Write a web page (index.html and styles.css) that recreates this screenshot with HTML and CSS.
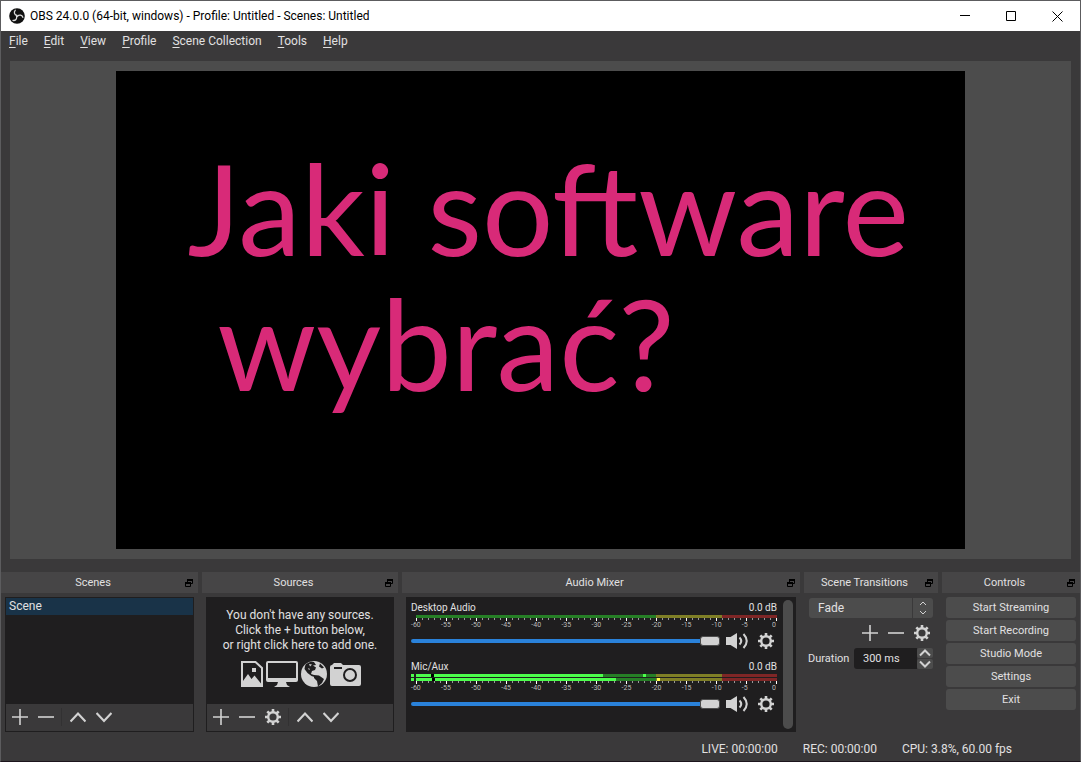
FILE: index.html
```html
<!DOCTYPE html>
<html lang="en">
  <head>
    <meta charset="UTF-8" />
    <meta name="viewport" content="width=device-width, initial-scale=1.0" />
    <title>OBS 24.0.0 (64-bit, windows) - Profile: Untitled - Scenes: Untitled</title>
    <link rel="stylesheet" href="styles.css">
  </head>
  <body>
    <!-- shared icons -->
    <svg class="sprite" aria-hidden="true">
      <symbol id="plus" viewBox="0 0 16 16"><path d="M8 0v16M0 8h16" stroke="currentColor" stroke-width="1.6" /></symbol>
      <symbol id="minus" viewBox="0 0 16 16"><path d="M0 8h16" stroke="currentColor" stroke-width="1.6" /></symbol>
      <symbol id="up" viewBox="0 0 16 16"><path d="M.5 12.500l7.500-8 7.500 8" fill="none" stroke="currentColor" stroke-width="2.2" /></symbol>
      <symbol id="down" viewBox="0 0 16 16"><path d="M.5 4l7.500 8 7.500-8" fill="none" stroke="currentColor" stroke-width="2.2" /></symbol>
      <symbol id="gear" viewBox="0 0 16 16">
        <circle cx="8" cy="8" r="4.8" fill="none" stroke="currentColor" stroke-width="2.4" />
        <path d="M8 0v3M8 13v3M0 8h3M13 8h3M2.300 2.300l2.200 2.200M11.500 11.500l2.200 2.200M2.300 13.700l2.200-2.200M11.500 4.500l2.200-2.200" stroke="currentColor" stroke-width="2.6" />
      </symbol>
      <symbol id="speaker" viewBox="0 0 22 16">
        <path d="M0 4h4.500L11 0v16l-6.500-4H0z" fill="currentColor" />
        <path d="M13.500 4.500q3.500 3.500 0 7M17.500 1q6.500 7 0 14" fill="none" stroke="currentColor" stroke-width="2" />
      </symbol>
      <symbol id="float" viewBox="0 0 8 8">
        <path d="M2.500 3V.5h5v4H6" fill="none" stroke="#000" />
        <path d="M2 1h6" stroke="#000" stroke-width="2" />
        <path d="M.5 3.500h5v4h-5z" fill="#464546" stroke="#000" />
        <path d="M0 4h6" stroke="#000" stroke-width="2" />
      </symbol>
    </svg>

    <div class="window">
      <header class="titlebar">
        <svg class="logo" viewBox="0 0 16 16">
          <circle cx="8" cy="8" r="7.800" fill="#111" />
          <g fill="none" stroke="#ddd" stroke-width="1.300" stroke-linecap="round">
            <path d="M8 7.500C5.300 6.800 4.600 4.200 6.200 2.300" />
            <path d="M8 7.500C5.300 6.800 4.600 4.200 6.200 2.300" transform="rotate(120 8 8)" />
            <path d="M8 7.500C5.300 6.800 4.600 4.200 6.200 2.300" transform="rotate(240 8 8)" />
          </g>
        </svg>
        <h1 class="caption">OBS 24.0.0 (64-bit, windows) - Profile: Untitled - Scenes: Untitled</h1>
        <button class="winbtn" aria-label="Minimize"><svg viewBox="0 0 11 11"><path d="M0 4.500h10" /></svg></button>
        <button class="winbtn" aria-label="Maximize"><svg viewBox="0 0 11 11"><path d="M.5.5h9v9h-9z" /></svg></button>
        <button class="winbtn" aria-label="Close"><svg viewBox="0 0 11 11"><path d="M.5.5l10 10M10.500.5l-10 10" /></svg></button>
      </header>

      <nav class="menu">
        <a href="#"><u>F</u>ile</a>
        <a href="#"><u>E</u>dit</a>
        <a href="#"><u>V</u>iew</a>
        <a href="#"><u>P</u>rofile</a>
        <a href="#"><u>S</u>cene Collection</a>
        <a href="#"><u>T</u>ools</a>
        <a href="#"><u>H</u>elp</a>
      </nav>

      <main class="preview">
        <div class="canvas">
          <p class="headline">Jaki software<br />&nbsp;wybrać?</p>
        </div>
      </main>

      <div class="docks">
        <section class="dock">
          <h2 class="dock-title"><span>Scenes</span><svg><use href="#float" /></svg></h2>
          <div class="panel">
            <ul class="list">
              <li class="selected">Scene</li>
            </ul>
            <div class="toolbar">
              <button class="tool" aria-label="Add scene"><svg><use href="#plus" /></svg></button>
              <button class="tool" aria-label="Remove scene"><svg><use href="#minus" /></svg></button>
              <span class="sep"></span>
              <button class="tool" aria-label="Move scene up"><svg><use href="#up" /></svg></button>
              <button class="tool" aria-label="Move scene down"><svg><use href="#down" /></svg></button>
            </div>
          </div>
        </section>

        <section class="dock">
          <h2 class="dock-title"><span>Sources</span><svg><use href="#float" /></svg></h2>
          <div class="panel">
            <div class="empty">
              <p>You don't have any sources.<br />Click the + button below,<br />or right click here to add one.</p>
              <div class="kinds">
                <svg class="image" viewBox="0 0 24 28">
                  <path d="M2 2h13.500l6.500 6v18H2z" fill="none" stroke="currentColor" stroke-width="2" />
                  <path d="M3 24v-3l5-7 3.500 5 3-3.500 6.500 8V26H3z" fill="currentColor" />
                  <path d="M12 8h4v4h-4z" fill="currentColor" />
                </svg>
                <svg class="display" viewBox="0 0 32 28">
                  <path fill-rule="evenodd" d="M2 1h28q2 0 2 2v17q0 2-2 2H20l1 3 3 2H8l3-2 1-3H2q-2 0-2-2V3q0-2 2-2zm0 2v15h28V3z" fill="currentColor" />
                </svg>
                <svg class="globe" viewBox="0 0 28 28">
                  <circle cx="14" cy="14" r="13" fill="currentColor" />
                  <path d="M6 4l5-2.500 3 .5 2 3-3 .5 3 2-1 2.500-3 1-1 3 3 1 .5 2-3-1-4-3-3-4 .5-3z" fill="#1f1e1f" />
                  <path d="M14 15l5 .5 5 3.500-2 4-4 3.500-1-5.500-3-3z" fill="#1f1e1f" />
                  <path d="M20 3.500l4 4-2 1-3-2z" fill="#1f1e1f" />
                  <path d="M9 4l3 .5-2 2zM8 8l2 1-1 1z" fill="currentColor" />
                </svg>
                <svg class="camera" viewBox="0 0 31 28">
                  <path d="M2 5l2-2h7l2 2h16q2 0 2 2v17q0 2-2 2H2q-2 0-2-2V7q0-2 2-2z" fill="currentColor" />
                  <circle cx="20" cy="15" r="6" fill="none" stroke="#1f1e1f" stroke-width="2" />
                  <path d="M4 8h8" stroke="#1f1e1f" stroke-width="2" />
                </svg>
              </div>
            </div>
            <div class="toolbar">
              <button class="tool" aria-label="Add source"><svg><use href="#plus" /></svg></button>
              <button class="tool" aria-label="Remove source"><svg><use href="#minus" /></svg></button>
              <button class="tool" aria-label="Source properties"><svg><use href="#gear" /></svg></button>
              <span class="sep"></span>
              <button class="tool" aria-label="Move source up"><svg><use href="#up" /></svg></button>
              <button class="tool" aria-label="Move source down"><svg><use href="#down" /></svg></button>
            </div>
          </div>
        </section>

        <section class="dock">
          <h2 class="dock-title"><span>Audio Mixer</span><svg><use href="#float" /></svg></h2>
          <div class="panel mixer">
            <div class="channels">
              <div class="channel">
                <div class="names"><label for="desktop">Desktop Audio</label><span>0.0 dB</span></div>
                <svg class="meter" viewBox="0 0 366 6" preserveAspectRatio="none" shape-rendering="crispEdges">
                  <defs>
                    <pattern id="ticks" x="5" y="0" width="30" height="3" patternUnits="userSpaceOnUse">
                      <path d="M0 0h1v3H0z" fill="#fff" />
                      <path d="M6 0h1v2H6zM12 0h1v2h-1zM18 0h1v2h-1zM24 0h1v2h-1z" fill="#999" />
                    </pattern>
                  </defs>
                  <path d="M5 0h240v3H5z" fill="#267f26" />
                  <path d="M245 0h66v3h-66z" fill="#7f7f26" />
                  <path d="M311 0h55v3h-55z" fill="#7f2626" />
                  <g transform="translate(0 3)"><path d="M5 0h361v3H5z" fill="url(#ticks)" /></g>
                </svg>
                <div class="scale"><span>-60</span><span>-55</span><span>-50</span><span>-45</span><span>-40</span><span>-35</span><span>-30</span><span>-25</span><span>-20</span><span>-15</span><span>-10</span><span>-5</span><span>0</span></div>
                <div class="volume">
                  <input type="range" id="desktop" min="0" max="100" value="100" />
                  <button class="mute" aria-label="Mute Desktop Audio"><svg><use href="#speaker" /></svg></button>
                  <button class="config" aria-label="Desktop Audio settings"><svg><use href="#gear" /></svg></button>
                </div>
              </div>

              <div class="channel">
                <div class="names"><label for="mic">Mic/Aux</label><span>0.0 dB</span></div>
                <svg class="meter double" viewBox="0 0 366 10" preserveAspectRatio="none" shape-rendering="crispEdges">
                  <path d="M5 0h240v3H5zM5 4h240v3H5z" fill="#267f26" />
                  <path d="M245 0h66v3h-66zM245 4h66v3h-66z" fill="#7f7f26" />
                  <path d="M311 0h55v3h-55zM311 4h55v3h-55z" fill="#7f2626" />
                  <path d="M0 0h3v3H0zM0 4h3v3H0zM5 0h187v3H5zM5 4h200v3H5zM232 0h3v3h-3z" fill="#4cff4c" />
                  <path d="M20 0h3v3h-3zM21 4h3v3h-3z" fill="#000" />
                  <path d="M246 4h3v3h-3z" fill="#ffff4c" />
                  <g transform="translate(0 7)"><path d="M5 0h361v3H5z" fill="url(#ticks)" /></g>
                </svg>
                <div class="scale"><span>-60</span><span>-55</span><span>-50</span><span>-45</span><span>-40</span><span>-35</span><span>-30</span><span>-25</span><span>-20</span><span>-15</span><span>-10</span><span>-5</span><span>0</span></div>
                <div class="volume">
                  <input type="range" id="mic" min="0" max="100" value="100" />
                  <button class="mute" aria-label="Mute Mic/Aux"><svg><use href="#speaker" /></svg></button>
                  <button class="config" aria-label="Mic/Aux settings"><svg><use href="#gear" /></svg></button>
                </div>
              </div>
            </div>
            <div class="scrollbar"></div>
          </div>
        </section>

        <section class="dock">
          <h2 class="dock-title"><span>Scene Transitions</span><svg><use href="#float" /></svg></h2>
          <div class="transitions">
            <div class="combo">
              <select aria-label="Transition">
                <option>Fade</option>
                <option>Cut</option>
              </select>
              <svg viewBox="0 0 20 20"><path d="M7 7l3-3 3 3M7 13l3 3 3-3" /></svg>
            </div>
            <div class="actions">
              <button class="tool" aria-label="Add transition"><svg><use href="#plus" /></svg></button>
              <button class="tool" aria-label="Remove transition"><svg><use href="#minus" /></svg></button>
              <button class="tool" aria-label="Transition properties"><svg><use href="#gear" /></svg></button>
            </div>
            <div class="duration">
              <label for="duration">Duration</label>
              <input type="text" id="duration" value="300 ms" />
              <div class="spin">
                <button aria-label="Increase"><svg viewBox="0 0 12 8"><path d="M1 6.500l5-5 5 5" /></svg></button>
                <button aria-label="Decrease"><svg viewBox="0 0 12 8"><path d="M1 1.500l5 5 5-5" /></svg></button>
              </div>
            </div>
          </div>
        </section>

        <section class="dock">
          <h2 class="dock-title"><span>Controls</span><svg><use href="#float" /></svg></h2>
          <div class="controls">
            <button>Start Streaming</button>
            <button>Start Recording</button>
            <button>Studio Mode</button>
            <button>Settings</button>
            <button>Exit</button>
          </div>
        </section>
      </div>

      <footer class="status">
        <span>LIVE: 00:00:00</span>
        <span>REC: 00:00:00</span>
        <span>CPU: 3.8%, 60.00 fps</span>
      </footer>
    </div>
  </body>
</html>
```
FILE: styles.css
```css
* {
  box-sizing: border-box;
}
body {
  margin: 0;
  font-family: Roboto, "Open Sans", sans-serif;
  font-size: 11px;
  line-height: 15px;
  color: #e1e0e1;
  background-color: #3a393a;
}
button,
input,
select {
  font: inherit;
  color: inherit;
  border: 0;
  margin: 0;
  padding: 0;
}
button {
  display: flex;
  align-items: center;
  justify-content: center;
  background: none;
}
h1,
h2,
p,
ul {
  margin: 0;
  padding: 0;
  font-size: inherit;
  font-weight: normal;
}
.sprite {
  position: absolute;
  width: 0;
  height: 0;
}
.window {
  display: flex;
  flex-direction: column;
  height: 100vh;
  border: 1px solid #5c5c5e;
  border-bottom-color: #1c141c;
}

/* title bar */
.titlebar {
  display: flex;
  align-items: center;
  height: 30px;
  padding-left: 8px;
  color: #000;
  background-color: #fff;
}
.logo {
  width: 16px;
  height: 16px;
  margin-right: 5px;
}
.caption {
  flex: 1;
  font-size: 12px;
}
.winbtn {
  width: 46px;
  height: 30px;
}
.winbtn svg {
  width: 11px;
  height: 11px;
  fill: none;
  stroke: #000;
}

/* menu */
.menu {
  display: flex;
  gap: 16px;
  padding: 3px 8px 12px;
  font-size: 12px;
}
.menu a {
  color: inherit;
  text-decoration: none;
}
.menu u {
  text-underline-offset: 2px;
}

/* preview */
.preview {
  flex: 1;
  min-height: 0;
  display: flex;
  justify-content: center;
  margin: 0 9px;
  padding: 10px;
  background-color: #4c4c4c;
}
.canvas {
  aspect-ratio: 16 / 9;
  padding: 69px 0 0 72px;
  background-color: #000;
}
.headline {
  font-family: Lato, sans-serif;
  font-size: 126px;
  line-height: 135px;
  color: #d82a78;
  white-space: nowrap;
}

/* docks */
.docks {
  display: grid;
  grid-template-columns: 197fr 196fr 398fr 134fr 138fr;
  gap: 4px;
  min-height: 160px;
  margin-top: 13px;
}
.dock {
  display: flex;
  flex-direction: column;
  min-width: 0;
}
.dock-title {
  display: flex;
  align-items: center;
  height: 21px;
  padding-right: 5px;
  text-align: center;
  background-color: #464546;
}
.dock-title span {
  flex: 1;
}
.dock-title svg {
  width: 8px;
  height: 8px;
}
.panel {
  flex: 1;
  display: flex;
  flex-direction: column;
  margin: 4px 4px 0;
  border: 1px solid #1f1e1f;
  background-color: #1f1e1f;
}
.list {
  flex: 1;
  font-size: 12px;
  list-style: none;
}
.selected {
  padding: 1px 3px;
  background-color: #193348;
}
.toolbar {
  display: flex;
  align-items: center;
  gap: 2px;
  height: 27px;
  padding: 0 0 2px 2px;
  background-color: #3a393a;
}
.tool {
  width: 24px;
  height: 24px;
  color: #d2d2d2;
}
.tool svg,
.config svg {
  width: 16px;
  height: 16px;
}
.sep {
  width: 2px;
  height: 18px;
  margin: 0 1px;
  border-left: 1px solid #323132;
}
.empty {
  flex: 1;
  padding-top: 10px;
  font-size: 12px;
  text-align: center;
}
.kinds {
  display: flex;
  justify-content: center;
  gap: 2px;
  margin-top: 7px;
  color: #d2d2d2;
}
.kinds svg {
  height: 28px;
}
.image {
  width: 24px;
}
.display {
  width: 32px;
}
.globe {
  width: 28px;
}
.camera {
  width: 31px;
}

/* mixer */
.mixer {
  flex-direction: row;
  gap: 6px;
  padding: 2px;
}
.channels {
  flex: 1;
  display: flex;
  flex-direction: column;
  gap: 8px;
  padding-left: 2px;
}
.names {
  display: flex;
  justify-content: space-between;
  font-size: 10px;
}
.meter {
  display: block;
  width: 100%;
  height: 6px;
}
.double {
  height: 10px;
}
.scale {
  display: flex;
  font-size: 7px;
  line-height: 8px;
  color: #bbb;
}
.scale span {
  flex: 1;
}
.scale span:last-child {
  flex: none;
  width: 5px;
}
.volume {
  display: flex;
  align-items: center;
  height: 20px;
  margin-top: 2px;
  color: #d2d2d2;
}
.volume input {
  flex: 1;
  min-width: 0;
  height: 10px;
  appearance: none;
  background: none;
}
.volume input::-webkit-slider-runnable-track {
  height: 4px;
  border-radius: 2px;
  background-color: #2a82da;
}
.volume input::-webkit-slider-thumb {
  appearance: none;
  width: 20px;
  height: 10px;
  margin-top: -3px;
  border: 1px solid #4c4c4c;
  border-radius: 3px;
  background-color: #d2d2d2;
}
.mute {
  width: 22px;
  margin: 0 10px 0 6px;
}
.mute svg {
  width: 22px;
  height: 16px;
}
.config {
  width: 16px;
  margin-right: 3px;
}
.scrollbar {
  width: 10px;
  border-radius: 5px;
  background-color: #4c4c4c;
}

/* transitions */
.transitions {
  display: flex;
  flex-direction: column;
  gap: 4px;
  padding: 5px 4px 0;
}
.combo {
  display: grid;
  margin: 0 1px;
}
.combo select,
.combo svg {
  grid-area: 1 / 1;
}
.combo select {
  height: 20px;
  padding-left: 9px;
  font-size: 12px;
  appearance: none;
  border-radius: 3px;
  background-color: #4c4c4c;
}
.combo svg {
  justify-self: end;
  width: 21px;
  height: 20px;
  border-left: 1px solid #3a393a;
  fill: none;
  stroke: #d2d2d2;
  pointer-events: none;
}
.actions {
  display: flex;
  justify-content: flex-end;
  gap: 2px;
  height: 22px;
  align-items: center;
}
.duration {
  display: flex;
  align-items: center;
  margin-right: 1px;
}
.duration label {
  flex: 1;
}
.duration input {
  width: 63px;
  height: 21px;
  padding-left: 9px;
  border-radius: 3px 0 0 3px;
  background-color: #1f1e1f;
}
.spin {
  display: flex;
  flex-direction: column;
  gap: 1px;
}
.spin button {
  width: 16px;
  height: 10px;
  border-radius: 2px;
  background-color: #4c4c4c;
}
.spin svg {
  width: 12px;
  height: 8px;
  fill: none;
  stroke: #d2d2d2;
  stroke-width: 2;
}

/* controls */
.controls {
  display: flex;
  flex-direction: column;
  gap: 2px;
  padding: 4px 4px 0;
}
.controls button {
  height: 21px;
  border-radius: 3px;
  background-color: #4c4c4c;
}

.status {
  display: flex;
  justify-content: flex-end;
  gap: 25px;
  padding: 10px 68px 4px 0;
  font-size: 12px;
}
```
